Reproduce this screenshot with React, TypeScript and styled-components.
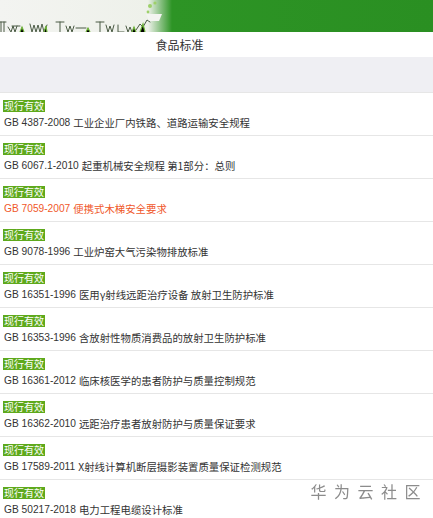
import styled, { createGlobalStyle } from "styled-components";

const GlobalStyle = createGlobalStyle`
  html, body {
    margin: 0;
    padding: 0;
    background: #fff;
  }
  body {
    font-family: "Liberation Sans", "Noto Sans CJK SC", sans-serif;
    color: #333;
  }
`;

const standards = [
  { code: "GB 4387-2008", name: "工业企业厂内铁路、道路运输安全规程" },
  { code: "GB 6067.1-2010", name: "起重机械安全规程 第1部分：总则" },
  { code: "GB 7059-2007", name: "便携式木梯安全要求", hot: true },
  { code: "GB 9078-1996", name: "工业炉窑大气污染物排放标准" },
  { code: "GB 16351-1996", name: "医用γ射线远距治疗设备 放射卫生防护标准" },
  { code: "GB 16353-1996", name: "含放射性物质消费品的放射卫生防护标准" },
  { code: "GB 16361-2012", name: "临床核医学的患者防护与质量控制规范" },
  { code: "GB 16362-2010", name: "远距治疗患者放射防护与质量保证要求" },
  { code: "GB 17589-2011", name: "X射线计算机断层摄影装置质量保证检测规范" },
  { code: "GB 50217-2018", name: "电力工程电缆设计标准" },
];

// grass strip drawn over the pale left end of the banner
const Grass = () => (
  <svg width="170" height="32" viewBox="0 0 170 32">
    <g fill="none" stroke="#4a5a44" strokeWidth="1" strokeLinecap="round">
      <path d="M1 22v10M0 22h6M4 22v10" />
      <path d="M8 27l3 5 2-6 2 6 2-6M12 26h8" />
      <path d="M30 24l2 8 2-7 2 7 2-7 2 7 2-8 2 8 3-7" />
      <path d="M60 22v10M56 22h8M66 26l2 6 2-6 2 6 2-6M76 28h10" />
      <path d="M100 22v10M96 22h8M106 25l2 7 2-6 2 6 2-7M118 25v7h6M126 26l2 6 2-5 2 5" />
      <path d="M136 30l4-6 3 3 4-7 3 2" />
    </g>
    <g stroke="#6fb43a" strokeWidth="1.2">
      <path d="M20 32l2-5 2 5M44 32l2-6 1 6M86 32l2-4 2 4M132 32l2-5 2 5M140 32l3-8 2 8" />
    </g>
    <g fill="#9ed06a">
      <circle cx="150" cy="6" r="2" />
      <circle cx="155" cy="3" r="1.6" />
      <circle cx="148" cy="12" r="1.4" />
    </g>
    <path d="M146 14h16l-3 7h-10z" fill="#f3f4f1" />
  </svg>
);

const Banner = styled.header`
  height: 32px;
  display: flex;
  align-items: flex-end;
  background: linear-gradient(90deg, #f3f4f1 0, #eef1ea 148px, #2d9425 172px, #2a8f22 100%);
  overflow: hidden;
`;

const TitleBar = styled.div`
  height: 25px;
  display: flex;
  align-items: center;
  justify-content: center;
  padding-right: 74px;
  font-size: 12px;
  color: #333;
  background: #fff;
`;

const Spacer = styled.div`
  height: 35px;
  background: #efeff3;
`;

const List = styled.ul`
  list-style: none;
  margin: 0;
  padding: 0;
`;

const Item = styled.li`
  border-top: 1px solid #e6e6e6;
  padding: 7px 4px 4px 3px;
  display: flex;
  flex-direction: column;
  align-items: flex-start;
  gap: 3px;
`;

const Badge = styled.span`
  background: #5ea91c;
  color: #fff;
  font-size: 10px;
  line-height: 12px;
  padding: 0 1px;
  font-family: "Noto Sans CJK SC", sans-serif;
`;

const Line = styled.div<{ $hot?: boolean }>`
  height: 16px;
  padding-left: 1px;
  color: ${(p) => (p.$hot ? "#f0582a" : "#333")};
  white-space: nowrap;
  display: flex;
  align-items: center;
  gap: 3px;
`;

const Code = styled.span`
  font-size: 10.2px;
  line-height: 16px;
`;

const Name = styled.span`
  font-size: 10.4px;
  line-height: 16px;
  font-family: "Noto Sans CJK SC", sans-serif;
`;

const Watermark = styled.div`
  position: fixed;
  right: 5px;
  bottom: 15px;
  font-family: "Noto Sans CJK SC", sans-serif;
  font-size: 16px;
  letter-spacing: 7.5px;
  color: #8c8c8c;
  pointer-events: none;
`;

export default function App() {
  return (
    <>
      <GlobalStyle />
      <Banner>
        <Grass />
      </Banner>
      <TitleBar>食品标准</TitleBar>
      <Spacer />
      <List>
        {standards.map((s) => (
          <Item key={s.code}>
            <Badge>现行有效</Badge>
            <Line $hot={s.hot}>
              <Code>{s.code}</Code>
              <Name>{s.name}</Name>
            </Line>
          </Item>
        ))}
      </List>
      <Watermark>华为云社区</Watermark>
    </>
  );
}
